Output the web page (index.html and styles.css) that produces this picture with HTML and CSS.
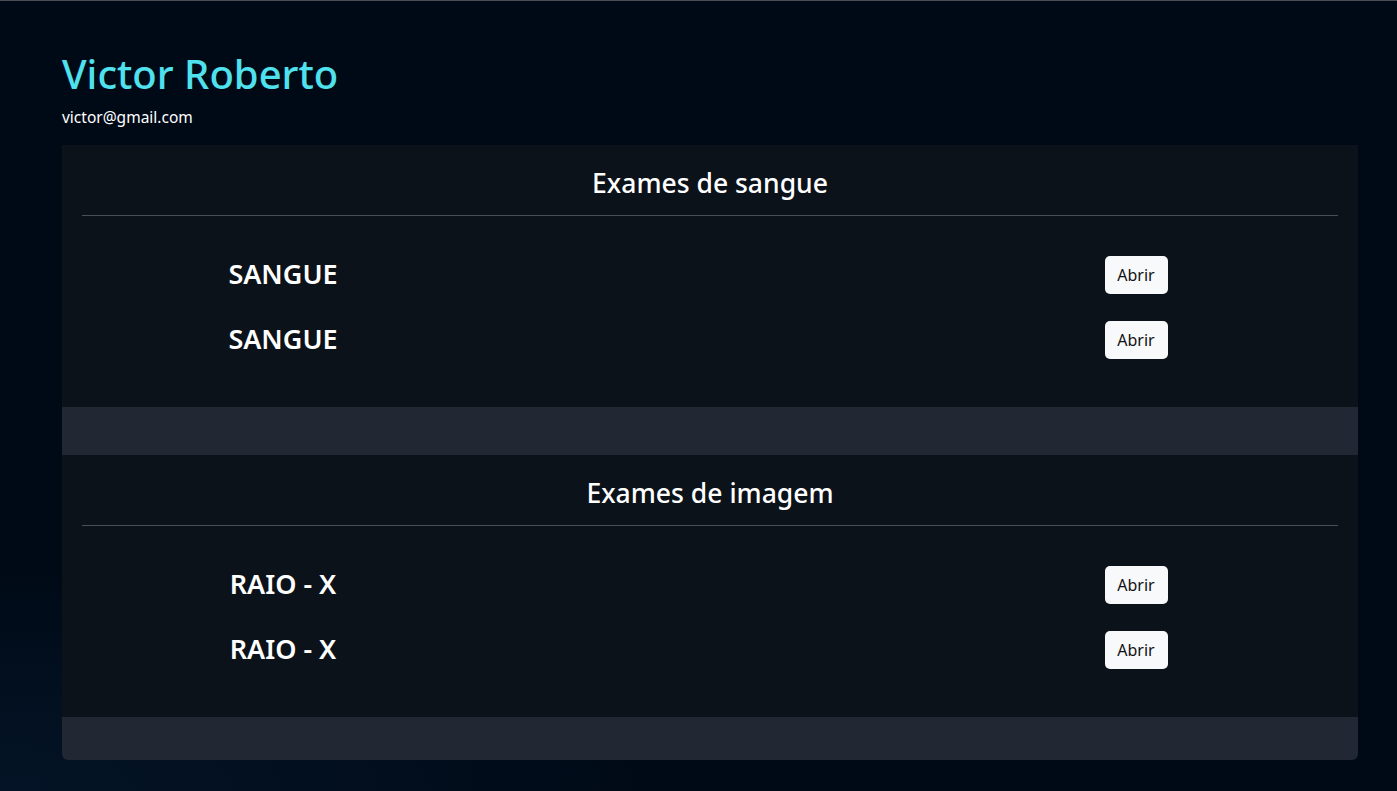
FILE: index.html
```html
<!DOCTYPE html>
<html lang="pt">
<head>
<meta charset="utf-8">
<title>Exames</title>
<link rel="stylesheet" href="styles.css">
</head>
<body>
<main class="page">
  <header class="profile">
    <h1 class="profile-name">Victor Roberto</h1>
    <p class="profile-email">victor@gmail.com</p>
  </header>
  <div class="card">
    <section class="group">
      <h2 class="group-title">Exames de sangue</h2>
      <div class="divider"></div>
      <ul class="exam-list">
        <li class="exam"><span class="exam-name">SANGUE</span><span class="exam-action"><button class="btn">Abrir</button></span></li>
        <li class="exam"><span class="exam-name">SANGUE</span><span class="exam-action"><button class="btn">Abrir</button></span></li>
      </ul>
    </section>
    <div class="band"></div>
    <section class="group">
      <h2 class="group-title">Exames de imagem</h2>
      <div class="divider"></div>
      <ul class="exam-list">
        <li class="exam"><span class="exam-name">RAIO - X</span><span class="exam-action"><button class="btn">Abrir</button></span></li>
        <li class="exam"><span class="exam-name">RAIO - X</span><span class="exam-action"><button class="btn">Abrir</button></span></li>
      </ul>
    </section>
    <div class="band band-last"></div>
  </div>
</main>
</body>
</html>
```
FILE: styles.css
```css
* { box-sizing: border-box; }
html, body { height: 100%; }
body {
  margin: 0;
  border-top: 1px solid #4b4e53;
  background: radial-gradient(ellipse 650px 220px at 0% 100%, #041426 0%, rgba(0,10,23,0) 100%), #000a17;
  font-family: "Noto Sans", "Open Sans", sans-serif;
  color: #ffffff;
}
.page {
  padding: 0 39px 0 62px;
}
.profile {
  padding-top: 49px;
}
.profile-name {
  margin: 0;
  font-size: 40px;
  font-weight: 500;
  line-height: 48px;
  color: #4fe1ed;
}
.profile-email {
  margin: 9px 0 0;
  font-size: 15.5px;
  line-height: 20px;
}
.card {
  margin-top: 18px;
  width: 1296px;
  background: #212733;
  border-radius: 0 0 6px 6px;
  overflow: hidden;
}
.group {
  background: #0c121a;
  padding: 20px 20px 0;
  height: 262px;
}
.group-title {
  margin: 0;
  text-align: center;
  font-size: 26.5px;
  font-weight: 500;
  line-height: 36px;
}
.divider {
  margin-top: 14px;
  height: 1px;
  background: #4a4f56;
}
.exam-list {
  list-style: none;
  margin: 40px 0 0;
  padding: 0 102px 0 101px;
  display: flex;
  flex-direction: column;
  gap: 27px;
}
.exam {
  display: flex;
  justify-content: space-between;
  align-items: center;
  height: 38px;
}
.exam-name, .exam-action {
  width: 200px;
  text-align: center;
}
.exam-name {
  font-size: 27px;
  font-weight: 600;
  line-height: 34px;
  margin-top: -3px;
}
.btn {
  font-family: inherit;
  font-size: 16px;
  color: #111;
  background: #f8f9fa;
  border: none;
  border-radius: 5px;
  width: 63px;
  height: 38px;
  padding: 0;
}
.band { height: 48px; }
.band-last { height: 43px; }
```
